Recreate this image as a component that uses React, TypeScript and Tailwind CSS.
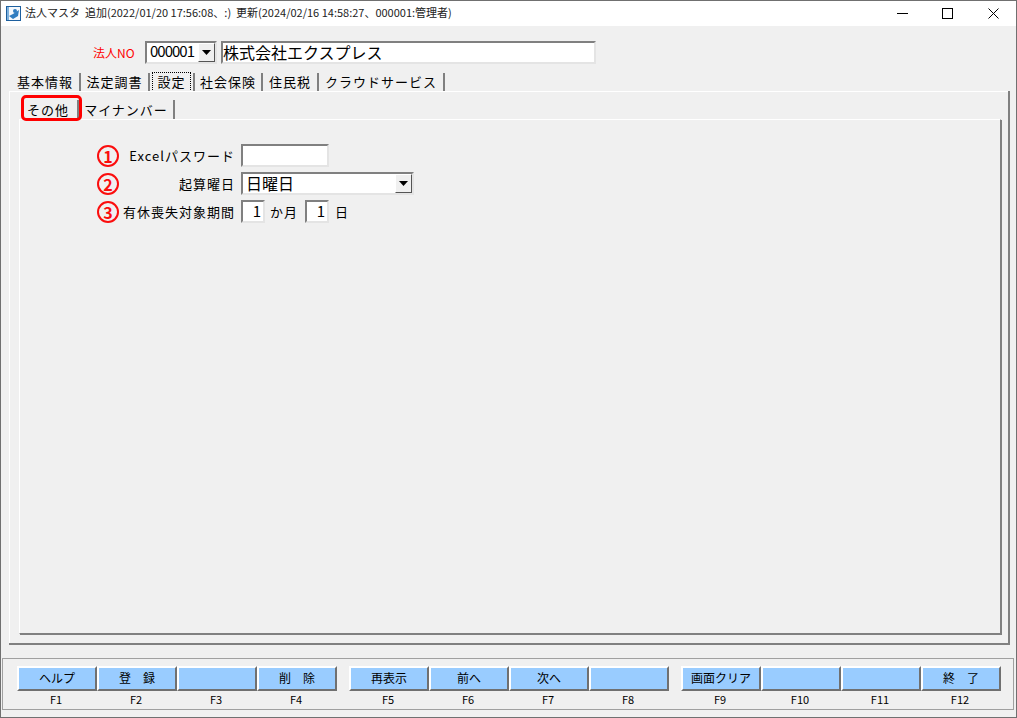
const font = "font-['Noto_Sans_CJK_JP','Liberation_Sans',sans-serif]";
const sunken = "border-2 border-t-[#808080] border-l-[#808080] border-r-[#e4e4e4] border-b-[#e4e4e4] bg-white";

const topTabs = [
  { label: "基本情報", w: "w-[70px]" },
  { label: "法定調書", w: "w-[69px]" },
  { label: "設定", w: "w-[45px]", active: true },
  { label: "社会保険", w: "w-[68px]" },
  { label: "住民税", w: "w-[56px]" },
  { label: "クラウドサービス", w: "w-[126px]" },
];

const keyGroups = [
  [
    { label: "ヘルプ", key: "F1" },
    { label: "登　録", key: "F2" },
    { label: "", key: "F3" },
    { label: "削　除", key: "F4" },
  ],
  [
    { label: "再表示", key: "F5" },
    { label: "前へ", key: "F6" },
    { label: "次へ", key: "F7" },
    { label: "", key: "F8" },
  ],
  [
    { label: "画面クリア", key: "F9" },
    { label: "", key: "F10" },
    { label: "", key: "F11" },
    { label: "終　了", key: "F12" },
  ],
];

const DropArrow = () => (
  <span className="flex h-[19px] w-[17px] items-center justify-center border border-t-white border-l-white border-r-[#555] border-b-[#555] bg-[#f0f0f0]">
    <svg width="9" height="5" viewBox="0 0 9 5">
      <path d="M0 0h9L4.5 5z" fill="#000" />
    </svg>
  </span>
);

const Num = ({ n }: { n: number }) => (
  <span className="flex h-[22px] w-[22px] shrink-0 items-center justify-center rounded-full border-2 border-[#fb0d0d] text-[16px] leading-none font-bold text-[#fb0d0d]">
    {n}
  </span>
);

const App = () => {
  return (
    <div className={`${font} flex h-[718px] w-[1017px] flex-col overflow-hidden border border-[#707070] bg-[#f0f0f0] text-[13px] text-black`}>
      {/* title bar */}
      <div className="flex h-[25px] shrink-0 items-center bg-white pl-[5px]">
        <svg width="15" height="15" viewBox="0 0 15 15" className="shrink-0">
          <rect x="0.5" y="0.5" width="14" height="14" fill="#f4f8fc" stroke="#1d5f9e" />
          <rect x="1" y="1" width="2" height="13" fill="#7fb2de" />
          <circle cx="9" cy="5" r="2" fill="#2f7cc0" />
          <path d="M3 10l4-2 6-4-1 6-5 3z" fill="#2f7cc0" />
        </svg>
        <span className="ml-[4px] pb-[2px] text-[11px] whitespace-pre text-[#222]">
          法人マスタ  追加(2022/01/20 17:56:08、:)  更新(2024/02/16 14:58:27、000001:管理者)
        </span>
        <div className="ml-auto flex items-center">
          <svg width="11" height="11" viewBox="0 0 11 11" className="mr-[34px]">
            <path d="M0 5.5h11" stroke="#000" />
          </svg>
          <svg width="11" height="11" viewBox="0 0 11 11" className="mr-[35px]">
            <rect x="0.5" y="0.5" width="10" height="10" fill="none" stroke="#000" />
          </svg>
          <svg width="11" height="11" viewBox="0 0 11 11" className="mr-[17px]">
            <path d="M0.5 0.5l10 10M10.5 0.5l-10 10" stroke="#000" />
          </svg>
        </div>
      </div>

      {/* corporation header */}
      <div className="mt-[15px] flex h-[23px] shrink-0 items-center pl-[92px]">
        <span className="w-[52px] text-[12px] text-[#f00]">法人NO</span>
        <div className={`${sunken} flex h-[23px] w-[72px] items-center justify-between pl-[3px] text-[15px] tracking-[-1px]`}>
          <span className="pb-[2px]">000001</span>
          <DropArrow />
        </div>
        <div className={`${sunken} ml-[4px] flex h-[23px] w-[375px] items-center pb-[2px] text-[16px]`}>
          株式会社エクスプレス
        </div>
      </div>

      {/* top tabs */}
      <div className="mt-[9px] flex h-[18px] shrink-0 pl-[10px] leading-[18px]">
        {topTabs.map((t) => (
          <div
            key={t.label}
            className={`${t.w} flex items-center justify-center border-r-2 border-r-[#808080] text-[13px] tracking-[1px] whitespace-nowrap`}
          >
            <span className={t.active ? "border border-dotted border-black px-[4px]" : ""}>{t.label}</span>
          </div>
        ))}
      </div>

      {/* outer tab panel */}
      <div className="relative mr-[8px] ml-[8px] flex h-[552px] flex-col border border-t-white border-l-white border-r-0 border-b-0 shadow-[1px_1px_0_1px_#808080] pt-[8px] pr-[7px] pl-[9px]">
        <div className="flex h-[19px] shrink-0 leading-[18px]">
          <div className="flex w-[60px] items-center justify-center border-r-2 border-r-[#808080] text-[13px] tracking-[1px]">
            その他
          </div>
          <div className="flex w-[96px] items-center justify-center border-r-2 border-r-[#808080] text-[13px] tracking-[1px]">
            マイナンバー
          </div>
        </div>

        {/* inner tab panel */}
        <div className="flex h-[515px] flex-col gap-[5px] border border-t-white border-l-white border-r-[#808080] border-b-[#808080] shadow-[1px_1px_0_0_#808080] pt-[24px] pl-[77px]">
          <div className="flex h-[23px] items-center">
            <Num n={1} />
            <span className="w-[116px] text-right text-[13px] tracking-[1px] whitespace-nowrap">Excelパスワード</span>
            <div className={`${sunken} ml-[6px] h-[23px] w-[88px]`} />
          </div>
          <div className="flex h-[23px] items-center">
            <Num n={2} />
            <span className="w-[116px] text-right text-[13px] tracking-[1px]">起算曜日</span>
            <div className={`${sunken} ml-[6px] flex h-[23px] w-[173px] items-center justify-between pl-[3px] text-[16px]`}>
              <span className="pb-[2px]">日曜日</span>
              <DropArrow />
            </div>
          </div>
          <div className="flex h-[23px] items-center">
            <Num n={3} />
            <span className="w-[116px] text-right text-[13px] tracking-[1px] whitespace-nowrap">有休喪失対象期間</span>
            <div className={`${sunken} ml-[6px] flex h-[23px] w-[24px] items-center justify-end pr-[2px] pb-[1px] text-[15px]`}>1</div>
            <span className="ml-[5px] w-[35px] text-[13px] tracking-[1px]">か月</span>
            <div className={`${sunken} flex h-[23px] w-[24px] items-center justify-end pr-[2px] pb-[1px] text-[15px]`}>1</div>
            <span className="ml-[6px] text-[13px]">日</span>
          </div>
        </div>

        {/* red highlight over the active sub tab */}
        <div className="absolute top-[3px] left-[11px] h-[26px] w-[61px] rounded-[5px] border-[3px] border-[#f00]" />
      </div>

      {/* function keys */}
      <div className="mt-[15px] mr-[2px] ml-[1px] flex h-[52px] shrink-0 gap-[12px] border border-[#a0a0a0] pt-[7px] pl-[14px]">
        {keyGroups.map((group, i) => (
          <div key={i} className="flex">
            {group.map((b) => (
              <div key={b.key} className="flex w-[80px] flex-col items-center">
                <div className="flex h-[25px] w-full items-center justify-center border-t-[2px] border-r-[2px] border-b-[2px] border-l-[2px] border-t-white border-r-[#707070] border-b-[#707070] border-l-white bg-[#99ccff] pb-[1px] text-[12px]">
                  {b.label}
                </div>
                <span className="pr-[2px] text-[11px] leading-[16px]">{b.key}</span>
              </div>
            ))}
          </div>
        ))}
      </div>
    </div>
  );
};

export default App;
